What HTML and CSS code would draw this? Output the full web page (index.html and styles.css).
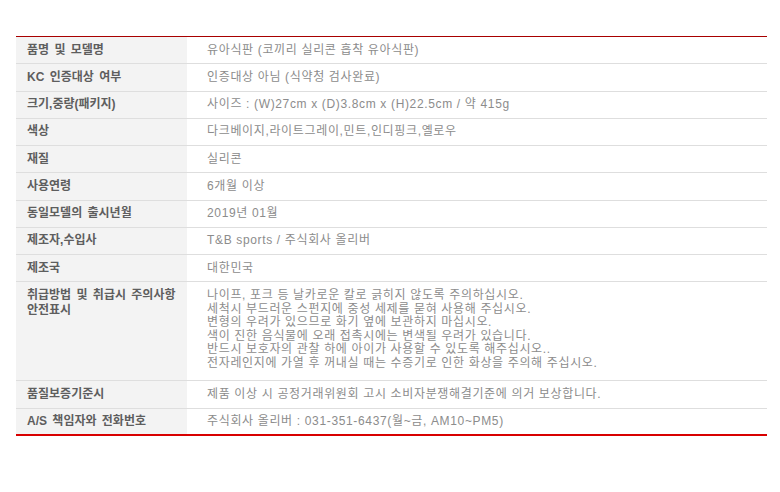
FILE: index.html
```html
<!DOCTYPE html>
<html lang="ko">
<head>
<meta charset="utf-8">
<title>상품정보</title>
<link rel="stylesheet" href="styles.css">
</head>
<body>
<table class="info">
  <tbody>
    <tr><th>품명 및 모델명</th><td>유아식판 (코끼리 실리콘 흡착 유아식판)</td></tr>
    <tr><th>KC 인증대상 여부</th><td>인증대상 아님 (식약청 검사완료)</td></tr>
    <tr><th>크기,중량(패키지)</th><td>사이즈 : (W)27cm x (D)3.8cm x (H)22.5cm / 약 415g</td></tr>
    <tr><th>색상</th><td>다크베이지,라이트그레이,민트,인디핑크,옐로우</td></tr>
    <tr><th>재질</th><td>실리콘</td></tr>
    <tr><th>사용연령</th><td>6개월 이상</td></tr>
    <tr><th>동일모델의 출시년월</th><td>2019년 01월</td></tr>
    <tr><th>제조자,수입사</th><td>T&amp;B sports / 주식회사 올리버</td></tr>
    <tr><th>제조국</th><td>대한민국</td></tr>
    <tr class="multi">
      <th>취급방법 및 취급시 주의사항<br>안전표시</th>
      <td>나이프, 포크 등 날카로운 칼로 긁히지 않도록 주의하십시오.<br>세척시 부드러운 스펀지에 중성 세제를 묻혀 사용해 주십시오.<br>변형의 우려가 있으므로 화기 옆에 보관하지 마십시오.<br>색이 진한 음식물에 오래 접촉시에는 변색될 우려가 있습니다.<br>반드시 보호자의 관찰 하에 아이가 사용할 수 있도록 해주십시오..<br>전자레인지에 가열 후 꺼내실 때는 수증기로 인한 화상을 주의해 주십시오.</td>
    </tr>
    <tr><th>품질보증기준시</th><td>제품 이상 시 공정거래위원회 고시 소비자분쟁해결기준에 의거 보상합니다.</td></tr>
    <tr class="last"><th>A/S 책임자와 전화번호</th><td>주식회사 올리버 : 031-351-6437(월~금, AM10~PM5)</td></tr>
  </tbody>
</table>
</body>
</html>
```
FILE: styles.css
```css
html, body {
  margin: 0;
  padding: 0;
  background: #ffffff;
}

body {
  font-family: "Liberation Sans", "Noto Sans CJK KR", sans-serif;
  font-size: 12px;
}

.info {
  margin: 36px 0 0 16px;
  width: 751px;
  border-collapse: collapse;
  border-top: 1px solid #a80000;
  border-bottom: 2px solid #d80000;
}

.info th,
.info td {
  height: 27.25px;
  padding: 0;
  line-height: 15px;
  border-bottom: 1px solid #dedede;
  text-align: left;
  vertical-align: middle;
  box-sizing: border-box;
}

.info th {
  width: 171px;
  padding-left: 11px;
  background: #f3f3f3;
  color: #5e5e5e;
  font-weight: bold;
  word-spacing: 2px;
}

.info td {
  padding-left: 20px;
  color: #8c8c8c;
  font-weight: normal;
  letter-spacing: 0.65px;
}

.info .multi th,
.info .multi td {
  height: 99px;
  vertical-align: top;
  padding-top: 7px;
}

.info .multi th {
  padding-top: 6px;
}

.info .multi td {
  line-height: 13.5px;
}

.info .last th,
.info .last td {
  border-bottom: 0;
}
```
